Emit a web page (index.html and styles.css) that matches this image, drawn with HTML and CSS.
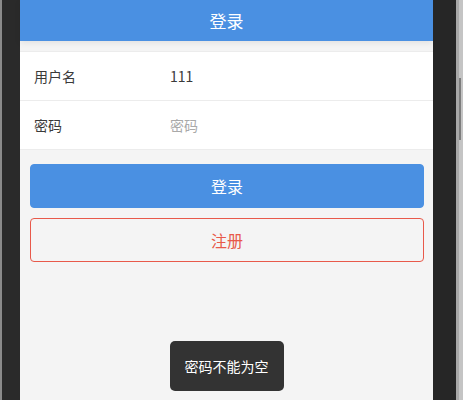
FILE: index.html
```html
<!DOCTYPE html>
<html lang="zh-CN">
<head>
    <meta charset="UTF-8">
    <meta name="viewport" content="width=device-width, initial-scale=1.0">
    <title>登录</title>
    <link rel="stylesheet" href="styles.css">
</head>
<body>
    <div class="device">
        <div class="bezel-left"><span class="edge"></span></div>
        <div class="screen">
            <header class="bar">登录</header>
            <div class="form">
                <div class="row">
                    <span class="label">用户名</span>
                    <span class="value">111</span>
                </div>
                <div class="row">
                    <span class="label">密码</span>
                    <span class="value placeholder">密码</span>
                </div>
            </div>
            <div class="actions">
                <button class="btn primary">登录</button>
                <button class="btn outline">注册</button>
            </div>
            <div class="toast-wrap">
                <div class="toast">密码不能为空</div>
            </div>
        </div>
        <div class="bezel-right">
            <span class="edge"></span>
            <div class="scroll"><span class="thumb"></span></div>
        </div>
    </div>
</body>
</html>
```
FILE: styles.css
```css
* {
    box-sizing: border-box;
    margin: 0;
    padding: 0;
}
body {
    width: 463px;
    height: 400px;
    overflow: hidden;
    font-family: "Noto Sans CJK SC", "Noto Sans", sans-serif;
    background-color: #262626;
}
.device {
    display: flex;
    height: 400px;
}
.bezel-left {
    width: 20px;
    display: flex;
    background-color: #2a2a2a;
}
.bezel-left .edge {
    width: 2px;
    background-color: #8a8a8a;
}
.bezel-right {
    width: 30px;
    display: flex;
    justify-content: flex-end;
    background-color: #262626;
}
.bezel-right .edge {
    width: 3px;
    background-color: #a8a8a8;
}
.scroll {
    width: 4px;
    background-color: #c4c4c4;
    display: flex;
    flex-direction: column;
}
.thumb {
    margin-top: 78px;
    height: 62px;
    width: 2px;
    background-color: #7c7c7c;
}
.screen {
    width: 413px;
    display: flex;
    flex-direction: column;
    background-color: #f4f4f4;
}
.bar {
    height: 41px;
    background-color: #4a90e2;
    color: #fff;
    font-size: 17px;
    display: flex;
    align-items: center;
    justify-content: center;
    box-shadow: 0 2px 6px rgba(0, 0, 0, 0.08);
}
.form {
    margin-top: 10px;
    background-color: #fff;
    border-top: 1px solid #ececec;
    border-bottom: 1px solid #ececec;
}
.row {
    height: 48px;
    display: flex;
    align-items: center;
    padding-left: 14px;
    font-size: 14px;
    color: #3a3a3a;
}
.row + .row {
    border-top: 1px solid #ececec;
    height: 49px;
}
.label {
    width: 136px;
}
.placeholder {
    color: #a9a9a9;
}
.actions {
    padding: 14px 9px 0 10px;
    display: flex;
    flex-direction: column;
    gap: 10px;
}
.btn {
    height: 44px;
    border-radius: 4px;
    font-family: inherit;
    font-size: 16px;
    border: 1px solid #4a90e2;
    background-color: #4a90e2;
    color: #fff;
}
.btn.outline {
    background-color: transparent;
    border-color: #e8594a;
    color: #e8594a;
}
.toast-wrap {
    margin-top: 79px;
    display: flex;
    justify-content: center;
}
.toast {
    height: 50px;
    padding: 0 15px;
    display: flex;
    align-items: center;
    border-radius: 5px;
    background-color: #333;
    color: #fff;
    font-size: 14px;
}
```
